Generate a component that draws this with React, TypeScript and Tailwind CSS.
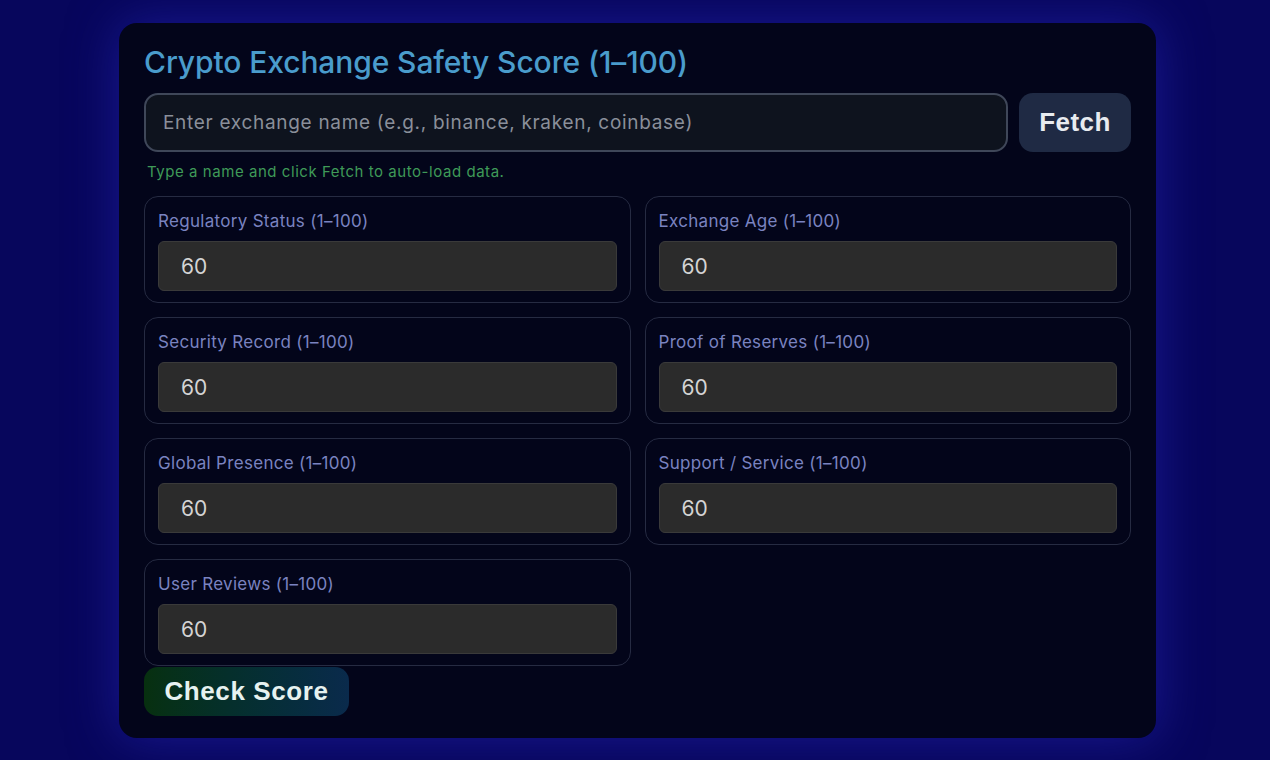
import { useState } from 'react';

const FIELDS = [
  'Regulatory Status (1–100)',
  'Exchange Age (1–100)',
  'Security Record (1–100)',
  'Proof of Reserves (1–100)',
  'Global Presence (1–100)',
  'Support / Service (1–100)',
  'User Reviews (1–100)',
];

const inter = { fontFamily: 'Inter, "Noto Sans", sans-serif' };
const arial = { fontFamily: '"Liberation Sans", Arial, sans-serif' };

export default function App() {
  const [name, setName] = useState('');
  const [vals, setVals] = useState<string[]>(FIELDS.map(() => '60'));

  return (
    <div className="min-h-[760px] w-full bg-[#07065c] pt-[23px] pb-[22px]" style={inter}>
      <div className="ml-[119px] w-[1037px] rounded-[18px] bg-[#03051a] px-[25px] pt-[20px] pb-[22px] shadow-[0_0_50px_rgba(40,40,190,0.55)]">
        <h1 className="text-[30px] leading-[38px] font-medium tracking-[-0.1px] text-[#4a9ccc]">
          Crypto Exchange Safety Score (1–100)
        </h1>
        <div className="mt-[12px] flex gap-[11px]">
          <input
            value={name}
            onChange={(e) => setName(e.target.value)}
            placeholder="Enter exchange name (e.g., binance, kraken, coinbase)"
            className="h-[59px] flex-1 rounded-[14px] border-2 border-[#3f4759] bg-[#0e131e] px-[17px] text-[19px] tracking-[0.7px] text-[#d1d5db] outline-none placeholder:text-[#8a8f9a]"
          />
          <button className="h-[59px] w-[112px] rounded-[14px] bg-[#1f2a44] text-[26px] font-bold tracking-[0.4px] text-[#e8ebf0]" style={arial}>
            Fetch
          </button>
        </div>
        <p className="mt-[10px] ml-[3px] text-[15px] leading-[20px] tracking-[0.55px] text-[#3f9a58]">
          Type a name and click Fetch to auto-load data.
        </p>
        <div className="mt-[14px] grid grid-cols-2 gap-[14px]">
          {FIELDS.map((f, i) => (
            <div key={f} className="h-[107px] rounded-[14px] border border-[#262b42] bg-[#03051a] px-[13px] pt-[12px]">
              <label className="block text-[17px] leading-[24px] tracking-[0.3px] text-[#7a83c0]">{f}</label>
              <input
                value={vals[i]}
                onChange={(e) => setVals((v) => v.map((x, j) => (j === i ? e.target.value : x)))}
                className="mt-[8px] h-[50px] w-full rounded-[6px] border border-[#3a3a3a] bg-[#2b2b2b] px-[22px] text-[21px] text-[#d4d4d4] outline-none"
              />
            </div>
          ))}
        </div>
        <button
          className="mt-[1px] h-[49px] w-[205px] rounded-[14px] bg-gradient-to-r from-[#07300f] to-[#0a2a4c] text-[26px] font-bold tracking-[0.6px] text-[#e6f2f0]"
          style={arial}
        >
          Check Score
        </button>
      </div>
    </div>
  );
}
